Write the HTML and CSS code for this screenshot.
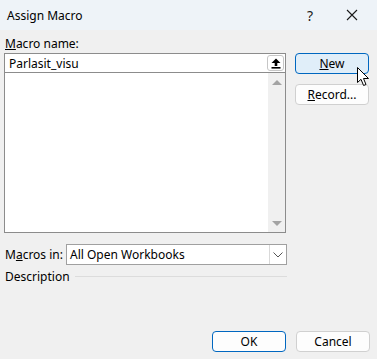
FILE: index.html
```html
<!DOCTYPE html>
<html lang="en">
<head>
  <meta charset="UTF-8" />
  <meta name="viewport" content="width=device-width, initial-scale=1.0"/>
  <title>Assign Macro</title>
  <link rel="stylesheet" href="styles.css">
</head>
<body>

  <div class="window">
    <!-- Title bar -->
    <div class="titlebar">
      <span class="title">Assign Macro</span>
      <div class="title-actions">
        <span class="help">?</span>
        <svg class="close" width="12" height="12" viewBox="0 0 12 12">
          <path d="M1 1 L11 11 M11 1 L1 11" stroke="#1a1a1a" stroke-width="1.1" fill="none"/>
        </svg>
      </div>
    </div>

    <div class="content">
      <div class="top">
        <div class="left">
          <div class="label"><u>M</u>acro name:</div>
          <div class="name-box">
            <span class="name-text">Parlasit_visu</span>
            <span class="up-btn">
              <svg width="10" height="11" viewBox="0 0 10 11">
                <path d="M5 0.5 L9.5 5 L6.3 5 L6.3 8 L3.7 8 L3.7 5 L0.5 5 Z" fill="#000"/>
                <rect x="0.5" y="9" width="9" height="1.6" fill="#000"/>
              </svg>
            </span>
          </div>
          <div class="list">
            <div class="list-items"></div>
            <div class="scrollbar">
              <span class="arrow-up"></span>
              <span class="arrow-down"></span>
            </div>
          </div>
        </div>

        <div class="side">
          <div class="btn btn-hover"><u>N</u>ew</div>
          <div class="btn"><u>R</u>ecord...</div>
        </div>
      </div>

      <div class="macros-row">
        <span class="label">M<u>a</u>cros in:</span>
        <div class="select">
          <span class="select-text">All Open Workbooks</span>
          <span class="select-btn">
            <svg width="10" height="6" viewBox="0 0 10 6">
              <path d="M0.5 0.5 L5 5 L9.5 0.5" stroke="#555" stroke-width="1" fill="none"/>
            </svg>
          </span>
        </div>
      </div>

      <div class="desc-row">
        <span class="label">Description</span>
        <span class="desc-line"></span>
      </div>
    </div>

    <div class="footer">
      <div class="btn btn-default">OK</div>
      <div class="btn">Cancel</div>
    </div>

    <!-- mouse pointer over New -->
    <svg class="cursor" width="13" height="20" viewBox="0 0 13 20">
      <path d="M0.5 0.5 L0.5 15.5 L4 12.3 L6.6 18.5 L9 17.5 L6.5 11.5 L11.5 11.5 Z" fill="#fff" stroke="#000" stroke-width="1" stroke-linejoin="round"/>
    </svg>
  </div>

</body>
</html>
```

FILE: styles.css
```css
body {
  margin: 0;
  background-color: #f0f0f0;
  font-family: 'Noto Sans', 'Segoe UI', sans-serif;
  font-size: 12px;
  color: #000;
}

.window {
  position: relative;
  width: 377px;
  height: 359px;
  background-color: #f0f0f0;
}

.titlebar {
  height: 30px;
  background-color: #eef3f8;
  display: flex;
  align-items: center;
  justify-content: space-between;
  padding: 0 19px 0 7px;
}

.title {
  font-size: 12px;
  color: #000;
}

.title-actions {
  display: flex;
  align-items: center;
  gap: 33px;
}

.help {
  font-size: 14px;
  color: #1a1a1a;
}

.content {
  padding: 6px 8px 0 4px;
}

.top {
  display: flex;
  align-items: flex-start;
}

.left {
  width: 283px;
}

.label {
  line-height: 15px;
  padding-left: 1px;
  margin-bottom: 2px;
}

.name-box {
  height: 18px;
  border: 1px solid #8c8c8c;
  background-color: #fff;
  display: flex;
  align-items: center;
  justify-content: space-between;
  padding: 0 1px 0 4px;
}

.up-btn {
  width: 17px;
  height: 16px;
  border: 1px solid #c6c6c6;
  border-radius: 3px;
  display: flex;
  align-items: center;
  justify-content: center;
  box-sizing: border-box;
}

.list {
  height: 159px;
  border: 1px solid #8c8c8c;
  border-top: none;
  background-color: #fff;
  display: flex;
}

.list-items {
  flex: 1;
}

.scrollbar {
  width: 17px;
  background-color: #f0f0f0;
  display: flex;
  flex-direction: column;
  justify-content: space-between;
  align-items: center;
  padding: 7px 0 6px;
}

.arrow-up {
  width: 0;
  height: 0;
  border-left: 5px solid transparent;
  border-right: 5px solid transparent;
  border-bottom: 5px solid #a3a3a3;
}

.arrow-down {
  width: 0;
  height: 0;
  border-left: 5px solid transparent;
  border-right: 5px solid transparent;
  border-top: 5px solid #a3a3a3;
}

.side {
  display: flex;
  flex-direction: column;
  gap: 10px;
  margin-left: 9px;
  margin-top: 17px;
}

.btn {
  width: 72px;
  height: 19px;
  box-sizing: content-box;
  border: 1px solid #d0d0d0;
  border-radius: 4px;
  background-color: #fdfdfd;
  display: flex;
  align-items: center;
  justify-content: center;
}

.btn-hover {
  background-color: #e0eef9;
  border-color: #0067c0;
}

.btn-default {
  border-color: #0067c0;
}

.macros-row {
  display: flex;
  align-items: center;
  margin-top: 11px;
  width: 283px;
}

.macros-row .label {
  margin: 0;
  width: 61px;
}

.select {
  flex: 1;
  height: 19px;
  border: 1px solid #a0a0a0;
  background-color: #fff;
  display: flex;
  align-items: center;
  justify-content: space-between;
  padding-left: 3px;
}

.select-btn {
  width: 16px;
  height: 19px;
  border-left: 1px solid #d9d9d9;
  display: flex;
  align-items: center;
  justify-content: center;
}

.desc-row {
  display: flex;
  align-items: center;
  margin-top: 4px;
  width: 283px;
}

.desc-row .label {
  margin: 0;
}

.desc-line {
  flex: 1;
  height: 1px;
  background-color: #dcdcdc;
  margin-left: 5px;
}

.footer {
  position: absolute;
  right: 7px;
  bottom: 7px;
  display: flex;
  gap: 10px;
}

.cursor {
  position: absolute;
  left: 357px;
  top: 67px;
}
```
